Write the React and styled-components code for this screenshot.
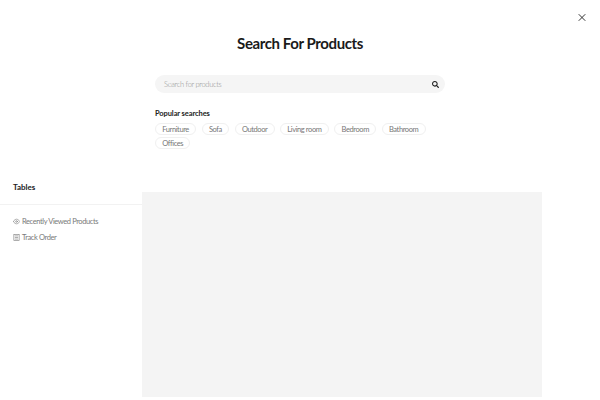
import React from "react";
import styled, { createGlobalStyle } from "styled-components";
import { FiX, FiEye } from "react-icons/fi";
import { FaSearch } from "react-icons/fa";

const POPULAR = ["Furniture", "Sofa", "Outdoor", "Living room", "Bedroom", "Bathroom", "Offices"];

const GlobalStyle = createGlobalStyle`
  html, body {
    margin: 0;
    padding: 0;
    background: #fff;
    font-family: "Lato", "Liberation Sans", sans-serif;
  }
`;

const Page = styled.div`
  position: relative;
  width: 600px;
  height: 400px;
  overflow: hidden;
  background: #fff;
  display: flex;
  flex-direction: column;
`;

const CloseButton = styled.button`
  position: absolute;
  top: 11px;
  right: 12px;
  width: 12px;
  height: 12px;
  padding: 0;
  border: 0;
  background: none;
  color: #333;
  display: flex;
  align-items: center;
  justify-content: center;
  font-size: 13px;
`;

const SearchSection = styled.div`
  width: 290px;
  margin: 0 auto;
  padding-top: 34px;
  height: 178px;
  box-sizing: border-box;
  flex-shrink: 0;
`;

const Title = styled.h2`
  margin: 0 0 22px;
  height: 19px;
  line-height: 19px;
  font-size: 15px;
  font-weight: 700;
  letter-spacing: -0.4px;
  color: #1a1a1a;
  text-align: center;
  white-space: nowrap;
`;

const SearchBar = styled.div`
  height: 18px;
  border-radius: 9px;
  background: #f5f5f5;
  display: flex;
  align-items: center;
  justify-content: space-between;
  padding: 0 6px 0 9px;
  font-size: 7.5px;
  font-weight: 300;
  letter-spacing: -0.3px;
  color: #8f8f8f;
`;

const SearchIcon = styled(FaSearch)`
  font-size: 7px;
  color: #1f1f1f;
`;

const PopularTitle = styled.div`
  margin-top: 16px;
  height: 10px;
  line-height: 10px;
  font-size: 7.5px;
  font-weight: 700;
  letter-spacing: -0.1px;
  color: #222;
`;

const ChipList = styled.div`
  margin-top: 4px;
  display: flex;
  flex-wrap: wrap;
  gap: 2px 5.5px;
`;

const Chip = styled.span`
  height: 12px;
  line-height: 11px;
  box-sizing: border-box;
  padding: 0 6.25px;
  border: 1px solid #f0f0f0;
  border-radius: 6px;
  font-size: 7.5px;
  letter-spacing: -0.4px;
  color: #777;
  white-space: nowrap;
`;

const BottomRow = styled.div`
  flex: 1;
  display: flex;
`;

const Sidebar = styled.aside`
  width: 142px;
  flex-shrink: 0;
`;

const SidebarTitle = styled.div`
  height: 27px;
  padding: 3px 0 0 13px;
  box-sizing: border-box;
  border-bottom: 1px solid #f2f2f2;
  line-height: 12px;
  font-size: 8px;
  font-weight: 700;
  color: #222;
`;

const LinkList = styled.div`
  padding: 11px 0 0 13px;
  display: flex;
  flex-direction: column;
  gap: 6px;
`;

const LinkRow = styled.div`
  height: 10px;
  display: flex;
  align-items: center;
  gap: 2px;
  font-size: 7.5px;
  letter-spacing: -0.4px;
  color: #7a7a7a;
  white-space: nowrap;
`;

const LinkIcon = styled.svg`
  width: 7px;
  height: 7px;
  flex-shrink: 0;
`;

const Preview = styled.div`
  width: 400px;
  height: 205px;
  margin-top: 14px;
  background: #f4f4f4;
`;

const App = () => (
  <Page>
    <GlobalStyle />
    <CloseButton aria-label="Close">
      <FiX />
    </CloseButton>
    <SearchSection>
      <Title>Search For Products</Title>
      <SearchBar>
        <span>Search for products</span>
        <SearchIcon />
      </SearchBar>
      <PopularTitle>Popular searches</PopularTitle>
      <ChipList>
        {POPULAR.map((name) => (
          <Chip key={name}>{name}</Chip>
        ))}
      </ChipList>
    </SearchSection>
    <BottomRow>
      <Sidebar>
        <SidebarTitle>Tables</SidebarTitle>
        <LinkList>
          <LinkRow>
            <LinkIcon as={FiEye} />
            Recently Viewed Products
          </LinkRow>
          <LinkRow>
            <LinkIcon viewBox="0 0 8 8" fill="none" stroke="currentColor" strokeWidth="0.7">
              <rect x="1" y="0.5" width="6" height="7" />
              <path d="M2.2 2.2h3.6M2.2 4h3.6M2.2 5.8h3.6" />
            </LinkIcon>
            Track Order
          </LinkRow>
        </LinkList>
      </Sidebar>
      <Preview />
    </BottomRow>
  </Page>
);

export default App;
